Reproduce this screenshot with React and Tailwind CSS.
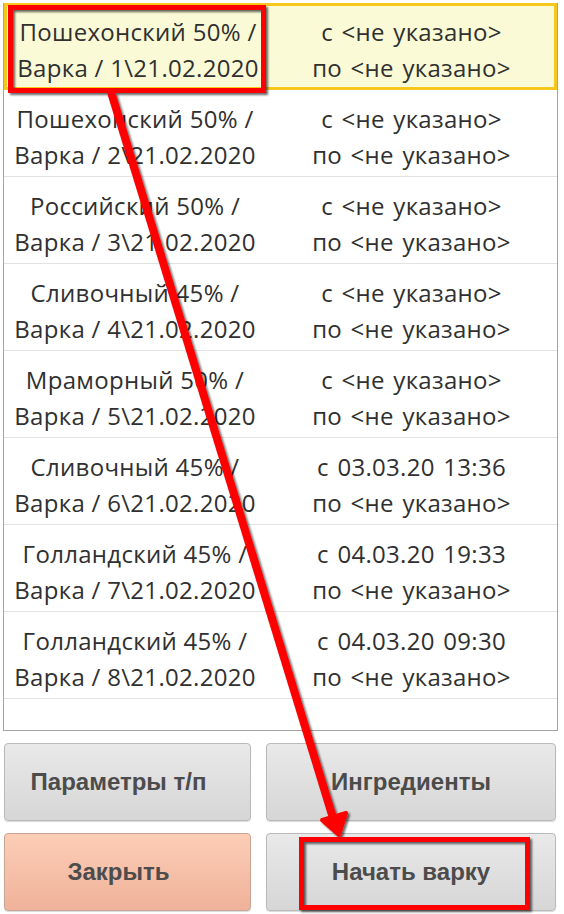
import { useState } from 'react'

const rows = [
    { name: 'Пошехонский 50% /', num: 1, from: '<не указано>', to: '<не указано>' },
    { name: 'Пошехонский 50% /', num: 2, from: '<не указано>', to: '<не указано>' },
    { name: 'Российский 50% /', num: 3, from: '<не указано>', to: '<не указано>' },
    { name: 'Сливочный 45% /', num: 4, from: '<не указано>', to: '<не указано>' },
    { name: 'Мраморный 50% /', num: 5, from: '<не указано>', to: '<не указано>' },
    { name: 'Сливочный 45% /', num: 6, from: '03.03.20 13:36', to: '<не указано>' },
    { name: 'Голландский 45% /', num: 7, from: '04.03.20 19:33', to: '<не указано>' },
    { name: 'Голландский 45% /', num: 8, from: '04.03.20 09:30', to: '<не указано>' },
]

function Row({ row, selected, onClick }) {
    return (
        <div onClick={onClick}
            className={`flex h-[87px] items-center pt-[7px] leading-[36px] ${selected ? 'bg-[#fafad6] border-[3px] border-[#f6c81e]' : 'border-b border-[#e3e3e3]'}`}>
            <div className='w-[262px] text-center tracking-[0.3px]'>
                <div>{row.name}</div>
                <div>Варка / {row.num}\21.02.2020</div>
            </div>
            <div className='flex-1 text-center tracking-[0.3px] [word-spacing:2px]'>
                <div>с {row.from}</div>
                <div>по {row.to}</div>
            </div>
        </div>
    )
}

function Btn({ children, peach, left }) {
    const bg = peach
        ? 'bg-gradient-to-b from-[#fdcdb6] to-[#efb29a] border-[#c9a595]'
        : 'bg-gradient-to-b from-[#e9e9e9] to-[#d6d6d6] border-[#b9b9b9]'
    return (
        <button className={`h-[78px] rounded-[4px] border ${bg} ${left ? 'pr-[18px]' : ''} font-bold text-[24px] text-[#4c4c4c] shadow-[0_1px_1px_rgba(0,0,0,0.15)]`}
            style={{ fontFamily: '"Liberation Sans", Arial, sans-serif' }}>
            {children}
        </button>
    )
}

export default function App() {
    const [selected, setSelected] = useState(0)

    return (
        <div className='relative w-[564px] h-[914px] bg-white overflow-hidden'
            style={{ fontFamily: '"Open Sans", "Noto Sans", sans-serif' }}>
            <div className='ml-[3px] mr-[6px] mt-[3px] h-[728px] border border-t-0 border-[#a3a3a3] text-[24px] text-[#303030]'>
                {rows.map((row, i) => (
                    <Row key={i} row={row} selected={selected === i} onClick={() => setSelected(i)} />
                ))}
            </div>

            <div className='grid grid-cols-[247px_290px] gap-x-[15px] gap-y-[12px] ml-[4px] mt-[12px]'>
                <Btn left>Параметры т/п</Btn>
                <Btn>Ингредиенты</Btn>
                <Btn peach left>Закрыть</Btn>
                <Btn>Начать варку</Btn>
            </div>

            {/* красные пометки поверх скрина */}
            <svg className='absolute inset-0 pointer-events-none' width='564' height='914'>
                <defs>
                    <filter id='sh' x='-10%' y='-10%' width='120%' height='120%'>
                        <feDropShadow dx='2' dy='2' stdDeviation='1.2' floodColor='#000' floodOpacity='0.6' />
                    </filter>
                </defs>
                <g filter='url(#sh)' fill='none' stroke='#ff0000'>
                    <rect x='10.5' y='7.5' width='253' height='83' strokeWidth='5' />
                    <rect x='301.5' y='839.5' width='226' height='68' strokeWidth='5' />
                    <line x1='111' y1='92' x2='333' y2='818' strokeWidth='8' />
                    <polygon points='339,835 322,820 346,813' fill='#ff0000' stroke='#ff0000' strokeWidth='4' strokeLinejoin='round' />
                </g>
            </svg>
        </div>
    )
}
